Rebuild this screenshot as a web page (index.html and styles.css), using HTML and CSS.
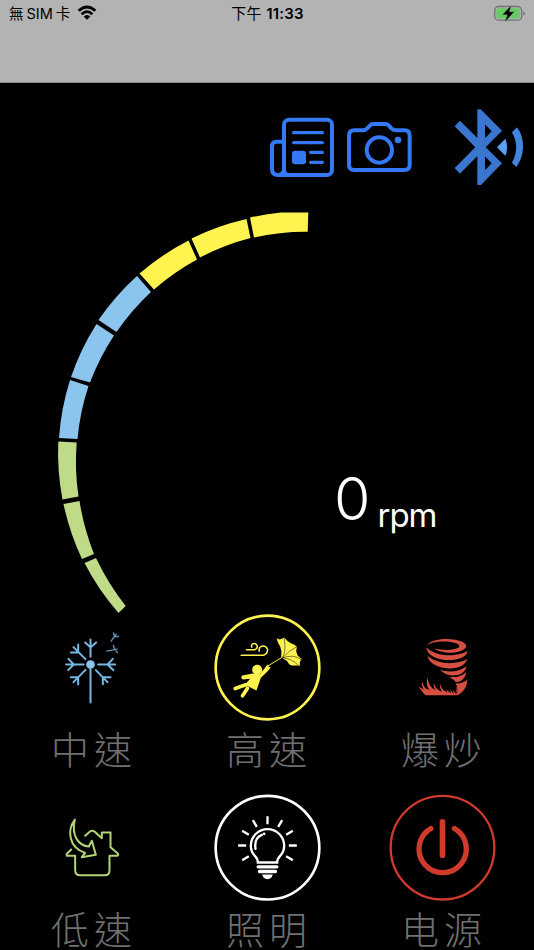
FILE: index.html
```
<!DOCTYPE html>
<html lang="zh-Hant">
<head>
  <meta charset="UTF-8" />
  <meta name="viewport" content="width=device-width, initial-scale=1.0"/>
  <title>Fan Control</title>
  <link rel="stylesheet" href="styles.css">
</head>

<body>
  <header class="status-bar">
    <div class="carrier">
      <span>無<span class="sim">SIM</span>卡</span>
      <svg class="wifi" viewBox="0 0 60 44">
        <path d="M2 14 Q30 -12 58 14 L52 20 Q30 0 8 20 Z"/>
        <path d="M11 24 Q30 6 49 24 L43 30 Q30 17 17 30 Z"/>
        <path d="M20 34 Q30 25 40 34 L30 44 Z"/>
      </svg>
    </div>
    <div class="time">下午 <span>11:33</span></div>
    <div class="power">
      <svg class="battery" viewBox="0 0 96 50">
        <rect x="2" y="4" width="81" height="41" rx="12" fill="none" stroke="#737373" stroke-width="4"/>
        <rect x="7" y="9" width="71" height="31" rx="7" fill="#66ca65"/>
        <path d="M88 18 Q98 25 88 32 Z" fill="#737373"/>
        <path d="M52 0 L25 29 H40 L33 50 L61 20 H46 Z" stroke="#8fbf8f" stroke-width="1"/>
      </svg>
    </div>
  </header>

  <nav class="toolbar">
    <svg class="news" viewBox="24 30 204 195" fill="none" stroke="#3478f6" stroke-width="12" stroke-linecap="round">
      <rect x="72" y="44" width="144" height="166" rx="15"/>
      <path d="M72 110 H50 Q36 110 36 124 V192 Q36 210 54 210 H88 M72 108 V191 Q72 208 55 210"/>
      <path d="M101 83 H187 M101 113 H187 M152 142 H187 M152 172 H187" stroke-width="10"/>
      <rect x="96" y="137" width="42" height="41" rx="9" fill="#3478f6" stroke="none"/>
    </svg>
    <svg class="camera" viewBox="255 42 207 168" fill="none" stroke="#3478f6" stroke-width="12">
      <path d="M283 76 H308 Q317 76 323 69 L330 61 Q333 57 341 57 H375 Q383 57 386 61 L394 70 Q400 76 410 76 H433 Q449 76 449 92 V180 Q449 195 433 195 H283 Q267 195 267 180 V92 Q267 76 283 76 Z"/>
      <circle cx="358" cy="135" r="38"/>
      <circle cx="414" cy="105" r="10" fill="#3478f6" stroke="none"/>
    </svg>
    <svg class="bluetooth" viewBox="24 18 222 246">
      <path d="M100 28 H110 L174 92 L125 142 L174 190 L111 255 H100 V168 L48 221 L32 204 L94 142 L32 79 L48 62 L100 114 Z M123 73 V115 L143 94 Z M123 169 V211 L143 190 Z" fill="#3b76ce" fill-rule="evenodd"/>
      <path d="M159 142 L184 116 Q195 142 184 167 Z" fill="#5ca0ef"/>
      <path d="M204 97 L219 82 Q238 107 237 142 Q236 175 217 201 L204 188 Q229 142 204 97 Z" fill="#4285df"/>
    </svg>
  </nav>

  <section class="gauge">
    <svg class="arc" viewBox="50 205 265 415">
      <g fill="#bfdb88">
        <path d="M118.500 613 A250 250 0 0 1 84.500 563 L96 558 A250 250 0 0 0 125.700 606 Z"/>
        <path d="M82 559 A250 250 0 0 1 63.500 504 L79.500 501 A250 250 0 0 0 94 554 Z"/>
        <path d="M62.500 499.500 A250 250 0 0 1 58.300 441.500 L76.700 442.500 A238 238 0 0 0 78.500 496.500 Z"/>
      </g>
      <g fill="#8bc4ed">
        <path d="M59 438 A250 250 0 0 1 70 380 L88.500 386 A238 238 0 0 0 77.500 439 Z"/>
        <path d="M71 377 A250 250 0 0 1 96.500 324 L114 335.500 A238 238 0 0 0 90 382.500 Z"/>
        <path d="M98.500 320 A250 250 0 0 1 137 276 L151 292 A238 238 0 0 0 116.500 332 Z"/>
      </g>
      <g fill="#fff44f">
        <path d="M139.500 273.500 A250 250 0 0 1 188.500 240.500 L197 259.500 A238 238 0 0 0 154 289.500 Z"/>
        <path d="M191.500 238.500 A250 250 0 0 1 246.500 219 L250.500 238 A238 238 0 0 0 200 257.500 Z"/>
        <path d="M250 217.500 A250 250 0 0 1 281 212.600 H308.300 L307.700 231.800 A238 238 0 0 0 254 237.500 Z"/>
      </g>
    </svg>
    <div class="speed"><span class="value">0</span><span class="unit">rpm</span></div>
  </section>

  <main class="controls">
    <div class="control">
      <svg viewBox="-19.5 -19.5 321 321" fill="none" stroke="#76b7e4" stroke-width="6" stroke-linecap="round">
        <circle cx="135" cy="132" r="13" fill="#8bc4ed" stroke="none"/>
        <path d="M135 145 V246 M135 109 V57 M119 66 L135 81 L152 66 M158 132 H209 M202 115 L186 132 L204 149 M114 132 H62 M69 115 L85 132 L68 149 M120 116 L84 80 M98 72 V96 M76 96 H98 M120 148 L84 185 M76 170 H98 V192 M151 149 L186 185 M172 191 V170 H195"/>
        <path d="M197 62 L212 41 M204 37 L207 48 L219 48 M184 92 L215 86 M204 75 L207 87 L216 96" stroke-width="4" stroke="#6494b7"/>
      </svg>
      <p>中速</p>
    </div>

    <div class="control">
      <svg viewBox="25.500 25.500 321 321" fill="none" stroke="#fff44f" stroke-linecap="round">
        <circle cx="186" cy="186" r="155.500" stroke-width="8"/>
        <path d="M107 149 H174 Q187 145 186 132 Q182 120 169 122 Q159 126 161 137 M123 133 H147 Q157 130 155 120 Q151 111 141 115 Q136 119 139 125" stroke-width="4.500"/>
        <path d="M188 181 L232 154" stroke-width="3"/>
        <path d="M214 98 L222 102 L231 99 L236 96 L245 106 L256 113 L267 118 L274 124 L272 138 L277 151 L288 160 L283 170 L283 181 L271 180 L258 180 L251 176 L244 166 L232 159 L227 153 L228 139 L224 122 L217 111 Z" fill="#fff44f" stroke="none"/>
        <path d="M231 157 Q243 140 236 98 M231 157 Q250 135 273 124 M231 157 Q264 145 286 161 M231 157 Q258 158 279 180" stroke="#000" stroke-width="1.500"/>
        <circle cx="155" cy="193" r="15" fill="#fff44f" stroke="none"/>
        <path d="M142 204 L163 206 L181 184 L185 177 L190 184 L196 185 L188 196 L166 217 L153 255 L118 238 L134 220 L112 222 Q104 217 110 210 Z" fill="#fff44f" stroke="none"/>
        <path d="M121 238 L89 249 M126 248 L111 271" stroke-width="11"/>
      </svg>
      <p>高速</p>
    </div>

    <div class="control">
      <svg viewBox="10.500 -19.500 321 321" fill="#d64f42">
        <path d="M125 75 C134 55 190 50 226 62 C256 74 242 94 196 97 C175 96 155 92 146 84 C180 92 216 88 221 79 C226 67 190 62 165 63 C145 64 132 68 125 75 Z"/>
        <path d="M123 80 C140 98 168 105 198 104 C222 103 238 97 246 91 C244 105 233 113 211 117 C171 124 123 109 123 80 Z"/>
        <path d="M126 106 C154 132 213 135 246 115 C239 136 217 145 190 144 C155 142 129 127 126 106 Z"/>
        <path d="M164 147 C190 158 221 153 243 138 C240 156 222 166 199 165 C183 163 171 157 164 147 Z"/>
        <path d="M191 169 C209 172 228 167 242 155 C240 173 226 185 211 185 C208 179 200 175 191 169 Z"/>
        <path d="M210 189 C225 190 235 186 246 178 C243 202 233 216 216 224 H120 C112 217 108 208 98 197 L115 207 C108 196 108 191 110 184 C114 199 120 206 131 208 C122 193 123 183 127 170 C128 190 136 202 151 209 C144 202 144 193 145 188 C149 201 158 211 170 213 C163 206 162 196 164 190 C166 203 174 212 186 216 L181 206 L196 219 L194 208 L205 221 L201 208 L210 218 C213 205 214 195 210 189 Z"/>
        <path d="M211 222 C216 211 215 201 212 194" fill="none" stroke="#000" stroke-width="2"/>
      </svg>
      <p>爆炒</p>
    </div>

    <div class="control">
      <svg viewBox="-4.500 27.500 321 321" fill="none" stroke="#b2d477" stroke-width="6" stroke-linejoin="round" stroke-linecap="round">
        <path d="M103 104 C80 135 83 188 134 204 L124 217 L166 210 L154 168 L145 185 C116 183 91 155 103 104 Z"/>
        <path d="M134 153 L146 142 Q153 135 162 140 L184 160 V143 H210 V187 L232 206 Q235 211 230 213 H207 V256 Q207 271 193 271 H119 Q104 271 104 256 V213 H80 Q76 210 80 206 L92 194"/>
      </svg>
      <p>低速</p>
    </div>

    <div class="control">
      <svg viewBox="520.500 27.500 321 321" fill="none" stroke="#fff" stroke-width="7">
        <circle cx="681" cy="188.500" r="155.500" stroke-width="8"/>
        <path d="M652 233 Q652 222 643 213 Q631 201 631 183 A50 50 0 0 1 731 183 Q731 201 719 213 Q710 222 710 233 Z"/>
        <path d="M645 192 Q640 160 664 150" stroke-linecap="round"/>
        <circle cx="671" cy="147" r="4" fill="#fff" stroke="none"/>
        <path d="M653 246 H709 M657 260 H705" stroke-width="10" stroke-linecap="round"/>
        <path d="M665 269 H697 Q693 283 681 283 Q669 283 665 269 Z" fill="#fff" stroke="none"/>
        <path d="M681 94 V118 M637 106 L649 126 M725 106 L713 126 M605 138 L625 150 M757 138 L737 150 M593 182 H617 M745 182 H769 M605 226 L625 214 M757 226 L737 214"/>
      </svg>
      <p>照明</p>
    </div>

    <div class="control">
      <svg viewBox="25.500 27.500 321 321" fill="none" stroke="#cf3a2d" stroke-linecap="round">
        <circle cx="186" cy="188.500" r="155.500" stroke-width="7"/>
        <path d="M151 131 A71 71 0 1 0 222 131" stroke-width="16"/>
        <path d="M186 111 V211" stroke-width="17"/>
      </svg>
      <p>电源</p>
    </div>
  </main>
</body>
</html>
```
FILE: styles.css
```
* {
  box-sizing: border-box;
}

body {
  margin: 0;
  width: 534px;
  height: 950px;
  overflow: hidden;
  background: #000;
  color: #fff;
  font-family: Inter, "Noto Sans CJK TC", sans-serif;
}

svg {
  display: block;
  flex: none;
}

.status-bar {
  display: grid;
  grid-template-columns: 1fr auto 1fr;
  align-items: start;
  height: 83px;
  padding: 4px 8px 0 9px;
  background: #b3b3b3;
  border-bottom: 1px solid #8d8d8d;
  color: #000;
  font-size: 15px;
  line-height: 20px;
}

.carrier {
  display: flex;
  gap: 7px;
  font-size: 14.5px;
}

.sim {
  margin: 0 3px;
}

.wifi {
  width: 20px;
  height: 15px;
  margin-top: 1px;
}

.time {
  font-weight: 400;
  letter-spacing: 0.2px;
}

.time span {
  font-weight: 600;
}

.power {
  display: flex;
  justify-content: flex-end;
}

.battery {
  width: 32px;
  height: 17px;
  margin-top: 1px;
}

.toolbar {
  display: flex;
  align-items: flex-start;
  height: 122px;
  padding-left: 268px;
}

.news {
  width: 68px;
  height: 65px;
  margin-top: 32px;
}

.camera {
  width: 69px;
  height: 56px;
  margin: 36px 0 0 9px;
}

.bluetooth {
  width: 74px;
  height: 82px;
  margin: 23px 0 0 38px;
}

.gauge {
  display: flex;
  height: 408.5px;
  padding-left: 50px;
}

.arc {
  width: 265px;
  height: 415px;
}

.speed {
  display: flex;
  align-items: flex-start;
  margin: 254px 0 0 19px;
}

.value {
  font-size: 59px;
  font-weight: 350;
  line-height: 80px;
}

.unit {
  margin: 16px 0 0 7px;
  font-size: 33px;
  letter-spacing: -1px;
  line-height: 80px;
}

.controls {
  display: grid;
  grid-template-columns: repeat(3, 175px);
  grid-auto-rows: 180.7px;
  padding-left: 4.5px;
}

.control {
  display: flex;
  flex-direction: column;
  align-items: center;
}

.control svg {
  width: 107px;
  height: 107px;
}

.control p {
  margin: 9px 0 0;
  padding-left: 4px;
  color: #707070;
  font-family: "Noto Sans CJK SC", sans-serif;
  font-size: 38px;
  font-weight: 300;
  letter-spacing: 5px;
  line-height: 36px;
}
```
